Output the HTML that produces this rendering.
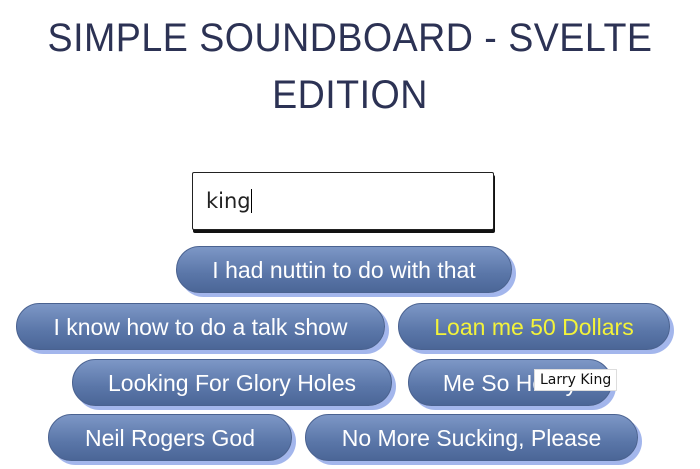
<!DOCTYPE html>
<html><head><style>
body{margin:0;width:700px;height:469px;background:#fff;font-family:"Liberation Sans",Arial,sans-serif;position:relative;overflow:hidden}
h1{position:absolute;left:0;top:10px;width:700px;margin:0;text-align:center;font-weight:normal;font-size:40px;line-height:57px;color:#2c3254;letter-spacing:0.5px;transform:scaleX(0.94);}
.in{position:absolute;left:192px;top:172px;width:302px;height:58px;border:1px solid #222;box-shadow:1px 3px 0 #111;border-radius:2px;background:#fff;box-sizing:border-box}
.in span{position:absolute;left:13px;top:16px;font-size:21px;color:#222;font-family:"DejaVu Sans",sans-serif}
.in span:after{content:"";display:inline-block;width:1px;height:24px;background:#000;vertical-align:-5px}
.b{position:absolute;height:47px;border-radius:24px;background:linear-gradient(#7d97c6,#5a76a8 60%,#4b6697);box-shadow:4px 4px 0 #a3b6ec;border:1px solid #4a6290;box-sizing:border-box;color:#fff;font-size:23px;text-align:center;line-height:47px;white-space:nowrap}
.tip{position:absolute;left:534px;top:369px;background:#fff;color:#111;padding:2px 5px;border:1px solid #ddd;font-family:"DejaVu Sans",sans-serif;font-size:14px}
</style></head><body>
<h1>SIMPLE SOUNDBOARD - SVELTE<br>EDITION</h1>
<div class="in"><span>king</span></div>
<div class="b" style="left:176px;top:246px;width:336px">I had nuttin to do with that</div>
<div class="b" style="left:16px;top:303px;width:369px">I know how to do a talk show</div>
<div class="b" style="left:398px;top:303px;width:272px;color:#f3f33a">Loan me 50 Dollars</div>
<div class="b" style="left:72px;top:359px;width:320px">Looking For Glory Holes</div>
<div class="b" style="left:408px;top:359px;width:204px">Me So Horny</div>
<div class="b" style="left:48px;top:414px;width:244px">Neil Rogers God</div>
<div class="b" style="left:305px;top:414px;width:333px">No More Sucking, Please</div>
<div class="tip">Larry King</div>
</body></html>
